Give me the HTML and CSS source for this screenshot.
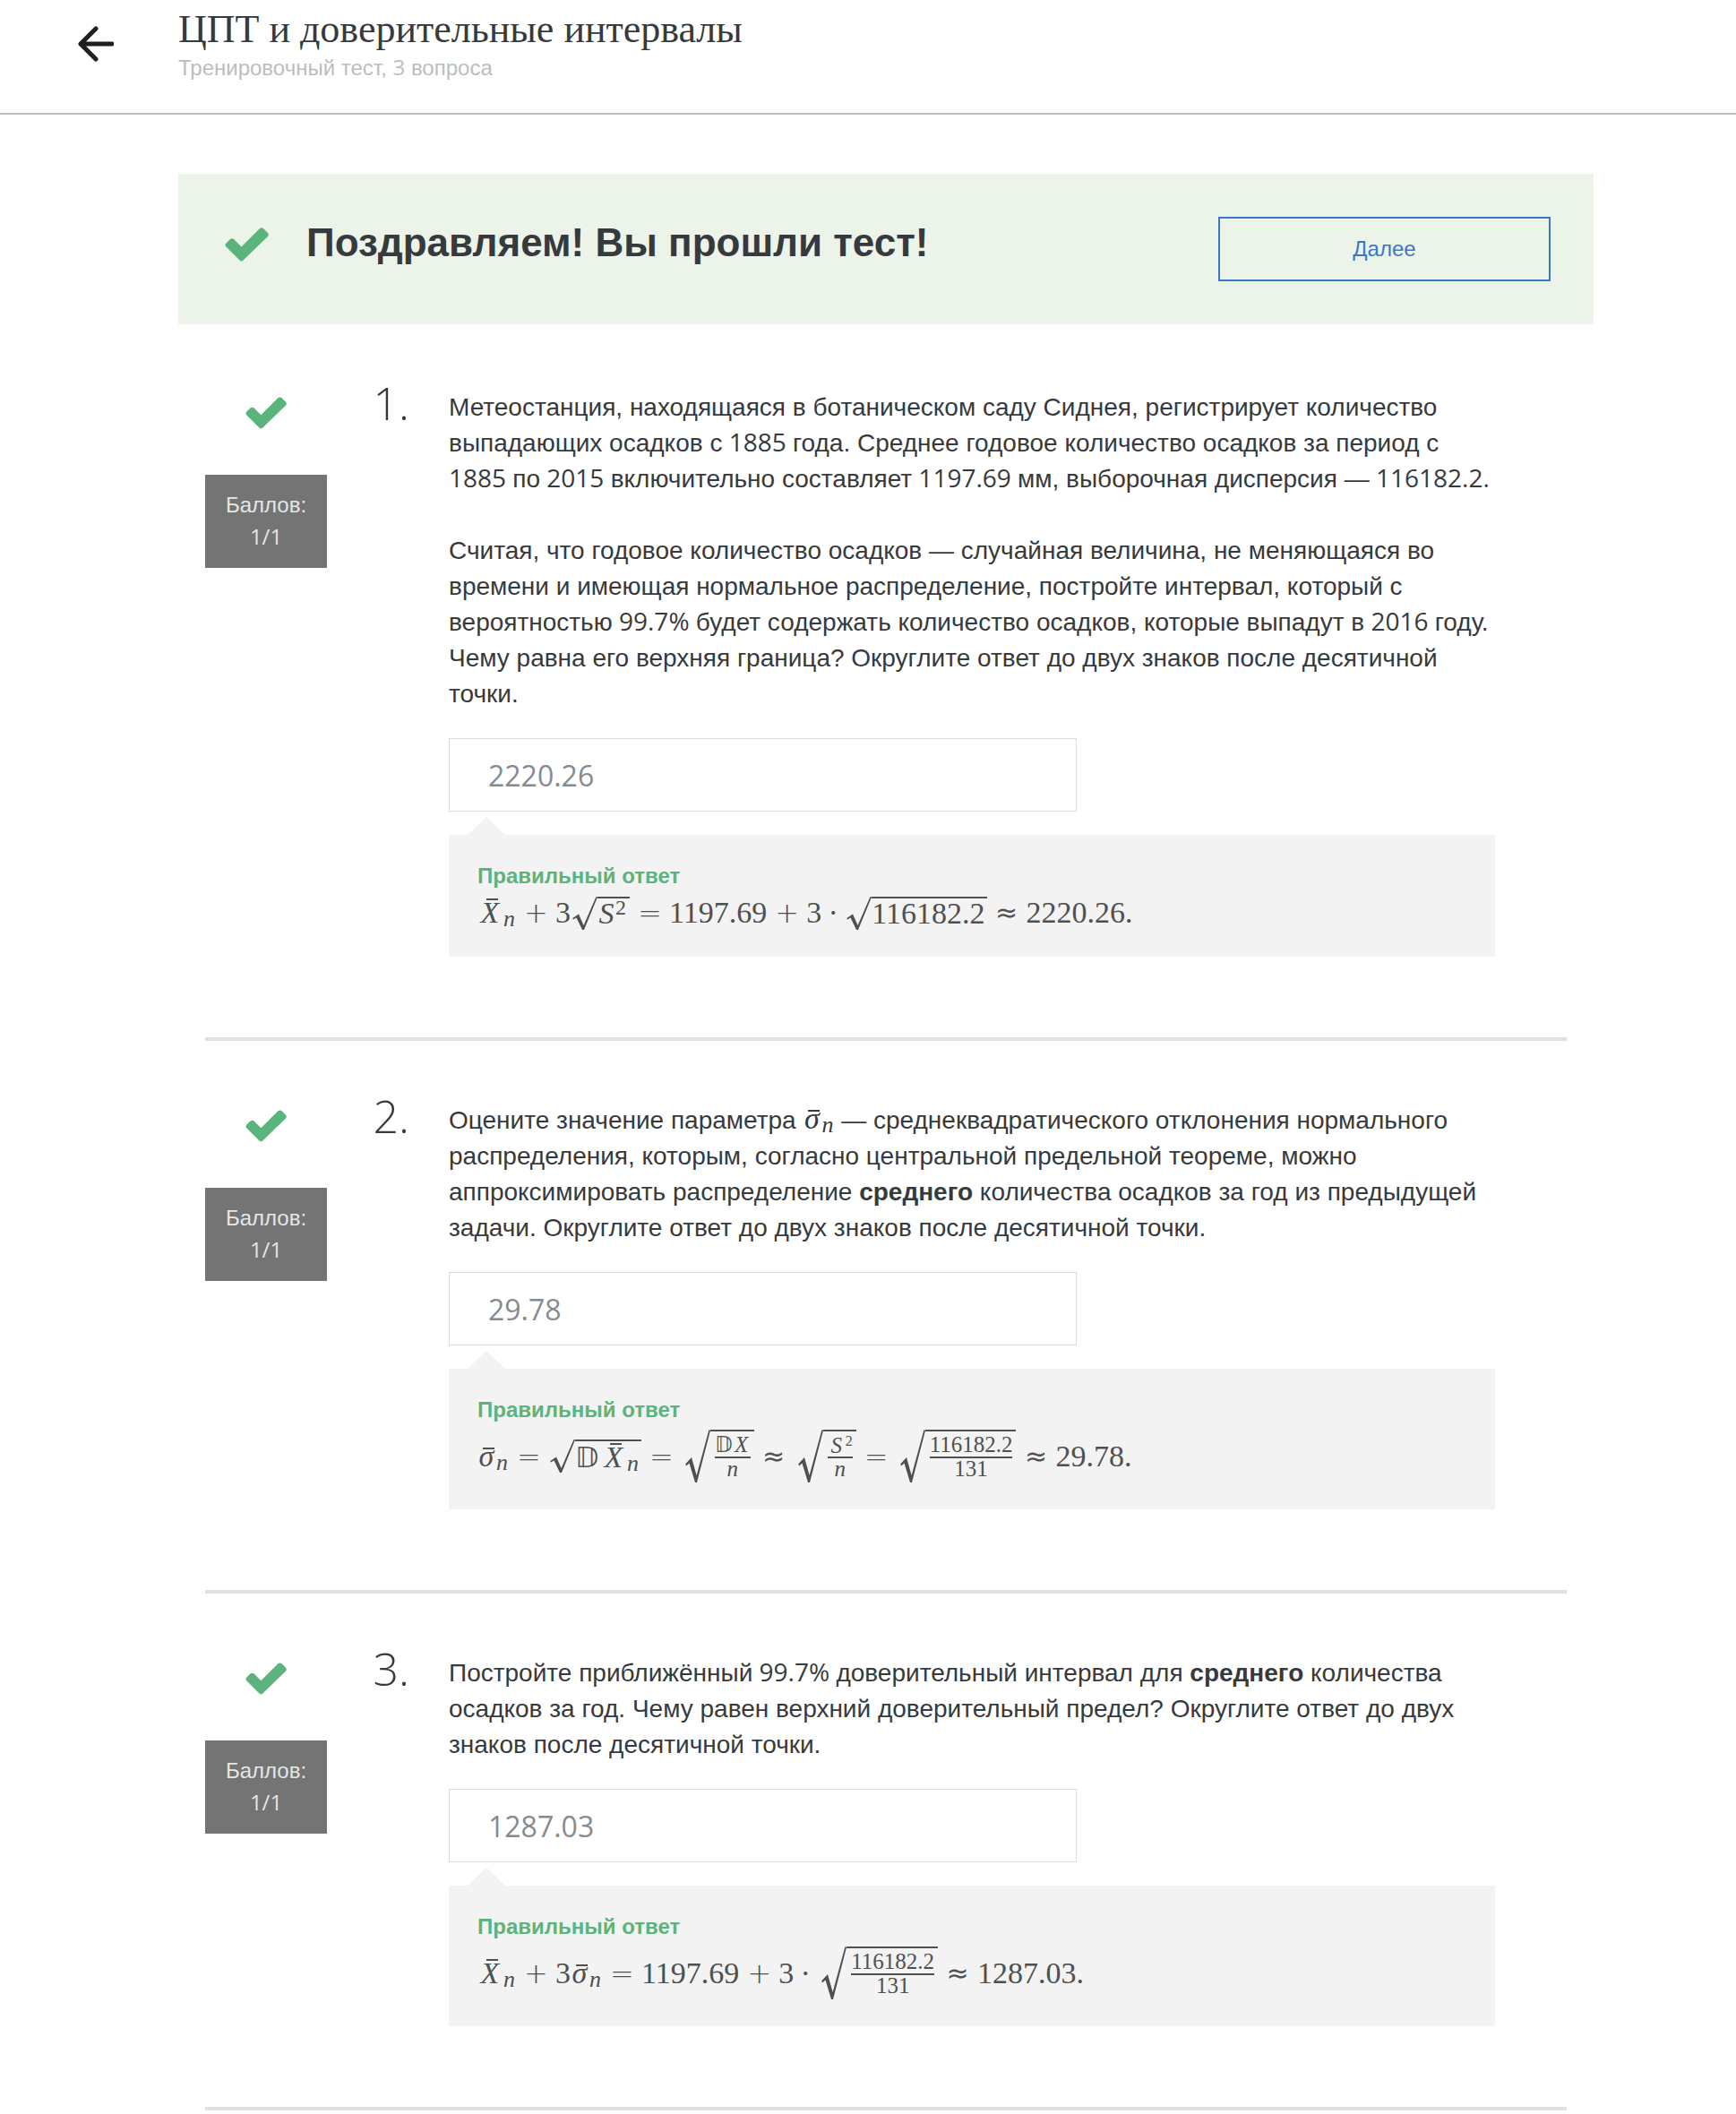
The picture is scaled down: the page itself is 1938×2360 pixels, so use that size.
FILE: index.html
```html
<!DOCTYPE html>
<html lang="ru">
<head>
<meta charset="utf-8">
<meta name="viewport" content="width=device-width, initial-scale=1">
<title>ЦПТ и доверительные интервалы</title>
<link rel="stylesheet" href="styles.css">
</head>
<body>
<svg class="defs" width="0" height="0" aria-hidden="true">
  <symbol id="check" viewBox="0 0 49 38"><path d="M1 21Q0 19.500 1 18L6 13Q8 11.500 10 13L18.500 21.500L39 1Q41 -0.500 43 1L48 6Q49.500 8 48 10L20 37Q18.500 38 17 37Z"/></symbol>
  <symbol id="surd" viewBox="0 0 28 40" preserveAspectRatio="none"><path d="M26.500 0L28 0.600L13 40L11 40L4.500 25.500L1 27.500L0.300 26L7 21L12.600 34.500Z"/></symbol>
</svg>

<header class="header">
  <a class="back" href="#" aria-label="Назад">
    <svg width="40" height="40" viewBox="0 0 40 40" fill="none" stroke="#1f1f1f" stroke-width="5" stroke-linecap="round" stroke-linejoin="round"><path d="M20 3L3 20L20 37M3 20H38"/></svg>
  </a>
  <div>
    <h1 class="title">ЦПТ и доверительные интервалы</h1>
    <p class="subtitle">Тренировочный тест, <span class="num">3</span> вопроса</p>
  </div>
</header>

<main class="main">
  <section class="banner">
    <svg class="banner-check"><use href="#check"/></svg>
    <h2 class="banner-title">Поздравляем! Вы прошли тест!</h2>
    <button class="next" type="button">Далее</button>
  </section>

  <section class="question">
    <div class="score">
      <svg class="check"><use href="#check"/></svg>
      <div class="points">Баллов: <span class="num">1/1</span></div>
    </div>
    <div class="index">1.</div>
    <div class="body">
      <p>Метеостанция, находящаяся в ботаническом саду Сиднея, регистрирует количество выпадающих осадков с<span class="num"> 1885 </span>года. Среднее годовое количество осадков за период с<span class="num"> 1885 </span>по<span class="num"> 2015 </span>включительно составляет<span class="num"> 1197.69 </span>мм, выборочная дисперсия —<span class="num"> 116182.2.</span></p>
      <p>Считая, что годовое количество осадков — случайная величина, не меняющаяся во времени и имеющая нормальное распределение, постройте интервал, который с вероятностью<span class="num"> 99.7% </span>будет содержать количество осадков, которые выпадут в<span class="num"> 2016 </span>году. Чему равна его верхняя граница? Округлите ответ до двух знаков после десятичной точки.</p>
      <input class="answer" type="text" value="2220.26" aria-label="Ответ на вопрос 1" readonly>
      <div class="feedback">
        <h3 class="verdict">Правильный ответ</h3>
        <div class="formula">
          <span class="var bar wide">X</span><span class="low">n</span><span class="op">+</span><span>3</span><span class="root"><svg><use href="#surd"/></svg><span class="rad"><span class="var">S</span><span class="high">2</span></span></span><span class="op">=</span><span>1197.69</span><span class="op">+</span><span>3</span><span class="dot">·</span><span class="root"><svg><use href="#surd"/></svg><span class="rad">116182.2</span></span><span class="op approx">≈</span><span>2220.26.</span>
        </div>
      </div>
    </div>
  </section>

  <section class="question">
    <div class="score">
      <svg class="check"><use href="#check"/></svg>
      <div class="points">Баллов: <span class="num">1/1</span></div>
    </div>
    <div class="index">2.</div>
    <div class="body">
      <p>Оцените значение параметра <span class="inline-math"><span class="var bar">σ</span><span class="low">n</span></span> — среднеквадратического отклонения нормального распределения, которым, согласно центральной предельной теореме, можно аппроксимировать распределение <b>среднего</b> количества осадков за год из предыдущей задачи. Округлите ответ до двух знаков после десятичной точки.</p>
      <input class="answer" type="text" value="29.78" aria-label="Ответ на вопрос 2" readonly>
      <div class="feedback">
        <h3 class="verdict">Правильный ответ</h3>
        <div class="formula">
          <span class="var bar">σ</span><span class="low">n</span><span class="op">=</span><span class="root"><svg><use href="#surd"/></svg><span class="rad"><span class="double">𝔻</span><span class="var bar wide">X</span><span class="low">n</span></span></span><span class="op">=</span><span class="root tall"><svg><use href="#surd"/></svg><span class="rad"><span class="frac"><span><span class="double">𝔻</span><i>X</i></span><span><i>n</i></span></span></span></span><span class="op approx">≈</span><span class="root tall"><svg><use href="#surd"/></svg><span class="rad"><span class="frac"><span><i>S</i><span class="small">2</span></span><span><i>n</i></span></span></span></span><span class="op">=</span><span class="root tall"><svg><use href="#surd"/></svg><span class="rad"><span class="frac"><span>116182.2</span><span>131</span></span></span></span><span class="op approx">≈</span><span>29.78.</span>
        </div>
      </div>
    </div>
  </section>

  <section class="question">
    <div class="score">
      <svg class="check"><use href="#check"/></svg>
      <div class="points">Баллов: <span class="num">1/1</span></div>
    </div>
    <div class="index">3.</div>
    <div class="body">
      <p>Постройте приближённый<span class="num"> 99.7% </span>доверительный интервал для <b>среднего</b> количества осадков за год. Чему равен верхний доверительный предел? Округлите ответ до двух знаков после десятичной точки.</p>
      <input class="answer" type="text" value="1287.03" aria-label="Ответ на вопрос 3" readonly>
      <div class="feedback">
        <h3 class="verdict">Правильный ответ</h3>
        <div class="formula">
          <span class="var bar wide">X</span><span class="low">n</span><span class="op">+</span><span>3</span><span class="var bar">σ</span><span class="low">n</span><span class="op">=</span><span>1197.69</span><span class="op">+</span><span>3</span><span class="dot">·</span><span class="root tall"><svg><use href="#surd"/></svg><span class="rad"><span class="frac"><span>116182.2</span><span>131</span></span></span></span><span class="op approx">≈</span><span>1287.03.</span>
        </div>
      </div>
    </div>
  </section>
</main>
</body>
</html>
```
FILE: styles.css
```css
* { box-sizing: border-box; }

body {
  margin: 0;
  background: #fff;
  color: #373a3c;
  font-family: "Liberation Sans", Arial, sans-serif;
  font-size: 28px;
  line-height: 40px;
}

h1, h2, h3, p { margin: 0; }

.defs { position: absolute; }

.num { font-family: "Open Sans", sans-serif; line-height: 1; }

.header {
  display: flex;
  height: 128px;
  border-bottom: 2px solid #bdbdbd;
}

.back { width: 199px; padding: 29px 0 0 87px; }
.back svg { display: block; }

.title {
  margin-top: 8px;
  font-family: "Liberation Serif", Georgia, serif;
  font-size: 44px;
  font-weight: 400;
  line-height: 50px;
}

.subtitle { font-size: 24px; line-height: 36px; color: #bdbdbd; }

.main { padding: 66px 159px 0 199px; }

.banner {
  display: flex;
  align-items: flex-start;
  margin-bottom: 4px;
  padding: 48px;
  background: #ecf4e9;
}

.banner-check { width: 49px; height: 38px; margin: 12px 42px 0 4px; fill: #5bb47c; }

.banner-title { flex: 1; font-size: 44px; line-height: 58px; }

.next {
  width: 371px;
  height: 72px;
  border: 2px solid #3c76c8;
  background: transparent;
  color: #3c76c8;
  font-family: inherit;
  font-size: 24px;
}

.question {
  display: grid;
  grid-template-columns: 136px 136px 1fr;
  margin: 0 30px;
  padding: 68px 80px 90px 0;
  border-bottom: 4px solid #e0e0e0;
}

.check { display: block; width: 46px; height: 36px; margin: 9px auto 51px; fill: #5bb47c; }

.points {
  height: 104px;
  padding: 16px;
  background: #747474;
  color: #e6e6e6;
  font-size: 24px;
  line-height: 36px;
  text-align: center;
}

.index {
  padding-right: 44px;
  font-family: "Open Sans", sans-serif;
  font-size: 50px;
  font-weight: 300;
  line-height: 32px;
  text-align: right;
}

.body { padding-top: 1px; }
.body p + p { margin-top: 40px; }

.answer {
  display: block;
  width: 60%;
  height: 82px;
  margin-top: 29px;
  padding: 1px 43px 0;
  border: 1px solid #dcdcdc;
  background: #fff;
  color: #868b8f;
  font-family: "Open Sans", sans-serif;
  font-size: 32px;
}

.feedback {
  position: relative;
  margin-top: 26px;
  padding: 32px 32px 30px;
  background: #f3f3f3;
}

.feedback::before {
  content: "";
  position: absolute;
  left: 21px;
  bottom: 100%;
  border: solid transparent;
  border-width: 0 21px 20px;
  border-bottom-color: #f3f3f3;
}

.verdict { font-size: 24px; line-height: 28px; color: #5bb47c; }

.formula {
  display: flex;
  align-items: center;
  min-height: 46px;
  padding-top: 8px;
  color: #505050;
  font-family: "Liberation Serif", "Times New Roman", serif;
  font-size: 34px;
  line-height: 36px;
}

.op {
  width: 26px;
  margin: 0 9px;
  font-family: "DejaVu Sans", sans-serif;
  font-size: 32px;
  font-weight: 200;
  text-align: center;
}

.approx { font-size: 30px; font-weight: 400; }

.dot { width: 26px; text-align: center; }

.var { position: relative; width: 20px; font-style: italic; text-align: center; }
.wide { width: 28px; }

.bar::before {
  content: "";
  position: absolute;
  left: 6px;
  top: 8px;
  width: 13px;
  height: 2px;
  background: currentColor;
}
.bar.wide::before { left: 10px; top: 2px; }

.low { padding-top: 14px; width: 15px; font-size: 26px; font-style: italic; line-height: 20px; text-align: center; }
.high { padding-bottom: 14px; width: 14px; font-size: 24px; line-height: 20px; }
.small { font-size: 16px; vertical-align: 8px; line-height: 1; }
.double { width: 29px; font-family: "DejaVu Sans", serif; font-size: 32px; }

.root { display: flex; height: 37px; padding-left: 2px; }
.root svg { width: 28px; height: 100%; fill: currentColor; }
.rad { display: flex; align-items: center; padding-right: 2px; border-top: 2px solid; }

.tall { height: 59px; padding-left: 5px; }
.tall .rad { padding: 0 4px 0 5px; }

.frac { display: flex; flex-direction: column; font-size: 25px; line-height: 24px; text-align: center; }
.frac > span:first-child { height: 27px; border-bottom: 2px solid; }
.frac i { display: inline-block; width: 20px; }
.frac .double { font-size: 24px; }

.inline-math {
  display: inline-flex;
  align-items: center;
  height: 30px;
  font-family: "Liberation Serif", serif;
  font-size: 34px;
  line-height: 30px;
}
.inline-math .bar::before { top: 5px; }
```
